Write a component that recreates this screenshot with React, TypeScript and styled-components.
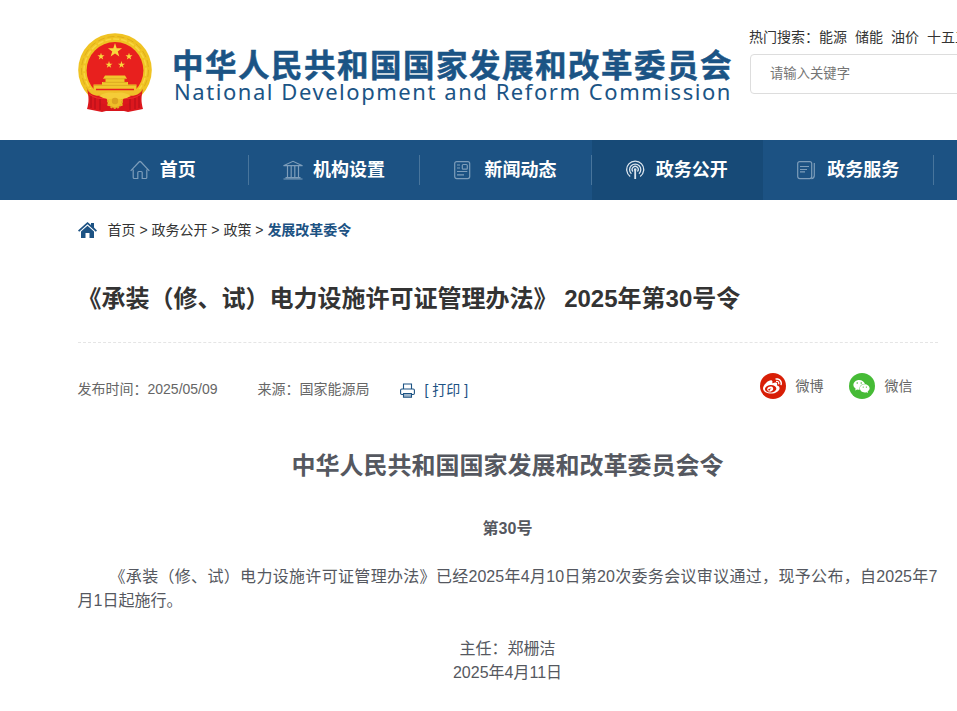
import React from "react";
import styled, { createGlobalStyle } from "styled-components";
import { FaWeibo, FaWeixin } from "react-icons/fa";

const GlobalStyle = createGlobalStyle`
  * { box-sizing: border-box; }
  body {
    margin: 0;
    overflow: hidden;
    background: #fff;
    color: #333;
    font-family: "Liberation Sans", "Noto Sans CJK SC", sans-serif;
    font-size: 14px;
    text-spacing-trim: space-all;
  }
  h1, h2, p { margin: 0; }
`;

const Page = styled.div`
  width: 957px;
  height: 711px;
  overflow: hidden;
`;

const Header = styled.header`
  display: flex;
  height: 140px;
  padding-left: 78px;
`;

const EmblemSvg = styled.svg`
  flex: none;
  width: 74px;
  height: 82px;
  margin-top: 32px;
`;

const Brand = styled.div`
  flex: none;
  width: 578px;
  margin: 48px 0 0 20px;
  color: #1b5485;
  white-space: nowrap;
`;

const BrandName = styled.div`
  height: 31px;
  font-family: "Noto Sans CJK SC", sans-serif;
  font-size: 31.5px;
  font-weight: 700;
  line-height: 31px;
  letter-spacing: 1.5px;
  -webkit-text-stroke: 0.5px #1b5485;
`;

const BrandLatin = styled.div`
  padding-left: 2px;
  font-family: "Noto Sans", sans-serif;
  font-size: 22px;
  line-height: 25px;
  letter-spacing: 1.55px;
`;

const SearchArea = styled.div`
  flex: none;
  width: 340px;
  padding-top: 26px;
`;

const HotWords = styled.div`
  display: flex;
  gap: 8px;
  height: 28px;
  margin-left: -1px;
  line-height: 22px;
  white-space: nowrap;
`;

const HotGroup = styled.span`
  display: flex;
`;

const SearchInput = styled.input`
  display: block;
  width: 320px;
  height: 40px;
  padding: 0 0 2px 19px;
  border: 1px solid #ddd;
  border-radius: 4px;
  outline: none;
  font: 13.33px "Liberation Sans", "Noto Sans CJK SC", sans-serif;
  &::placeholder { color: #757575; opacity: 1; }
`;

const Nav = styled.nav`
  display: flex;
  height: 60px;
  padding-left: 77.5px;
  background: #1c5283;
  overflow: hidden;
`;

const NavItem = styled.div<{ $active?: boolean }>`
  display: flex;
  flex: none;
  align-items: center;
  width: 171.4px;
  background: ${(p) => (p.$active ? "#174a77" : "transparent")};
`;

const NavContent = styled.div`
  display: flex;
  flex: 1;
  align-items: center;
  justify-content: center;
  gap: 10px;
  height: 60px;
  color: #fff;
  font-size: 18px;
  font-weight: 700;
  line-height: 60px;
  white-space: nowrap;
`;

const NavRule = styled.span<{ $hidden?: boolean }>`
  width: 1px;
  height: 30px;
  background: ${(p) => (p.$hidden ? "transparent" : "#48759c")};
`;

const NavSvg = styled.svg<{ $active?: boolean }>`
  flex: none;
  width: 20px;
  height: 20px;
  fill: none;
  stroke: ${(p) => (p.$active ? "#dbe5ee" : "#7d9dba")};
  stroke-width: ${(p) => (p.$active ? 1.3 : 1.2)};
`;

const Main = styled.main`
  width: 860px;
  margin-left: 77.5px;
`;

const Crumbs = styled.div`
  display: flex;
  align-items: center;
  height: 60px;
  line-height: 22px;
  white-space: pre;
  svg { flex: none; margin-right: 11px; }
`;

const Current = styled.strong`
  color: #1c5283;
`;

const Title = styled.h1`
  height: 83px;
  padding-top: 21px;
  border-bottom: 1px dashed #e5e5e5;
  font-size: 24px;
  line-height: 36px;
  white-space: nowrap;
`;

const Meta = styled.div`
  display: flex;
  height: 106px;
  padding-top: 34px;
  color: #666;
  line-height: 24px;
  white-space: nowrap;
`;

const MetaItem = styled.span<{ $width: number }>`
  width: ${(p) => p.$width}px;
`;

const Print = styled.span`
  display: flex;
  gap: 10px;
  padding-top: 1px;
  color: #1c5283;
  svg { margin-top: 5px; }
`;

const Share = styled.div`
  display: flex;
  gap: 25px;
  margin: -4px 25px 0 auto;
`;

const ShareItem = styled.span`
  display: flex;
  align-items: center;
  gap: 10px;
  height: 26px;
`;

const ShareIcon = styled.span<{ $color: string }>`
  display: flex;
  align-items: center;
  justify-content: center;
  width: 26px;
  height: 26px;
  border-radius: 50%;
  background: ${(p) => p.$color};
  color: #fff;
`;

const Article = styled.article`
  color: #555860;
  font-size: 16px;
  line-height: 24px;
`;

const OrderTitle = styled.h2`
  height: 68px;
  padding-top: 1px;
  font-size: 24px;
  line-height: 32px;
  text-align: center;
`;

const OrderNumber = styled.p`
  height: 48px;
  font-weight: 700;
  text-align: center;
`;

const Paragraph = styled.p`
  margin-bottom: 24px;
  text-align: justify;
  text-indent: 2em;
`;

const Signature = styled.p`
  text-align: center;
`;

function star(cx: number, cy: number, r: number) {
  return Array.from({ length: 10 }, (_, i) => {
    const radius = i % 2 ? r * 0.39 : r;
    const a = (i * Math.PI) / 5 - Math.PI / 2;
    return `${cx + radius * Math.cos(a)},${cy + radius * Math.sin(a)}`;
  }).join(" ");
}

function Emblem() {
  return (
    <EmblemSvg viewBox="0 0 74 82" aria-label="国徽">
      <ellipse cx="37" cy="38" rx="36.8" ry="36.8" fill="#f0c323" />
      <circle cx="37" cy="38" r="33.5" fill="none" stroke="#d9a81b" strokeWidth=".8" strokeDasharray="7 3" />
      <circle cx="37" cy="38" r="31" fill="none" stroke="#f8d640" strokeWidth="1.5" strokeDasharray="6 2" />
      <circle cx="37" cy="38.5" r="28.4" fill="#e8201e" />
      <g fill="#f8d83c">
        <polygon points={star(37, 18.5, 7.4)} />
        <polygon points={star(23, 24.5, 3.7)} />
        <polygon points={star(51, 24.5, 3.7)} />
        <polygon points={star(31, 32.8, 3.7)} />
        <polygon points={star(43.5, 32.8, 3.7)} />
      </g>
      <path d="M27 43.5h20l2 3.2H25zM27.5 46.7h19V50h3.5v2.5h8.5V57h-43v-4.5H24V50h3.5z" fill="#f1c72d" />
      <path d="M26 46.8h22M25 50.3h24M16 53.4h42" stroke="#cf981b" strokeWidth=".6" />
      <path d="M11 57h52l-7 11H18z" fill="#efbf28" />
      <path d="M18 57.5h38" stroke="#e8201e" strokeWidth="1.4" />
      <path d="M9 57c3 6 9 8 18 6l3 7-2 9-4 1-15-3c2-7 2-12 0-20M65 57c-3 6-9 8-18 6l-3 7 2 9 4 1 15-3c-2-7-2-12 0-20" fill="#dc171d" />
      <path d="M22 71q15 7 30 0l-2 8H24z" fill="#d8151c" />
      <path d="M13 64v12M17 66v11M22 67v11M61 64v12M57 66v11M52 67v11" stroke="#aa0f18" strokeWidth=".9" />
      <path d="M11 62q8 6 17 4M63 62q-8 6-17 4" fill="none" stroke="#f0372f" strokeWidth=".8" />
      <circle cx="37" cy="69" r="7" fill="#efbf28" stroke="#e1ad21" strokeWidth="2" strokeDasharray="2 1.4" />
      <path d="M21 64q7-5 16-3 9-2 16 3-8 5-16 2-8 3-16-2" fill="#f5cc38" />
      <circle cx="37" cy="69" r="3.2" fill="#dca320" />
    </EmblemSvg>
  );
}

type NavKind = "home" | "bank" | "news" | "signal" | "service";

const navDrawings: Record<NavKind, React.ReactNode> = {
  home: <path d="M.7 10.8 9 2Q10 1 11 2l8.3 8.8M3.2 9.5v8q0 1 1 1h3.6v-6q0-1 1-1h2.4q1 0 1 1v6h3.6q1 0 1-1v-8" />,
  bank: <path d="M.5 5.7 10 1.3l9.5 4.4zM1 5.7h18M4.5 6v11.5M8.2 6v11.5M11.8 6v11.5M15.5 6v11.5M2.5 17.7h15M.5 19h19" />,
  news: (
    <>
      <rect x=".7" y="1.6" width="15" height="17" rx="2" />
      <path d="M3 5h3M3 8h3M3 11.5h10.3M3 14.8h7" />
      <rect x="8.3" y="4.5" width="5" height="4.7" rx="1" />
    </>
  ),
  signal: (
    <>
      <path d="M4.2 16.5a8.5 8.5 0 1 1 10 0M5.4 13.8a5.6 5.6 0 1 1 7.6 0M7 11.5a3 3 0 1 1 4.4 0" />
      <circle cx="9.2" cy="9.5" r=".7" />
      <path d="M9.2 10v9" strokeWidth="1.8" />
    </>
  ),
  service: (
    <>
      <rect x=".7" y="1.6" width="14" height="17" rx="2" />
      <path d="M3 6.5h9M3 9.5h7M3 11.8h5M17.3 3v12.5q0 3-3 3.1" />
    </>
  ),
};

const navItems: { label: string; kind: NavKind; active?: boolean }[] = [
  { label: "首页", kind: "home" },
  { label: "机构设置", kind: "bank" },
  { label: "新闻动态", kind: "news" },
  { label: "政务公开", kind: "signal", active: true },
  { label: "政务服务", kind: "service" },
];

export default function App() {
  return (
    <Page>
      <GlobalStyle />
      <Header>
        <Emblem />
        <Brand>
          <BrandName>中华人民共和国国家发展和改革委员会</BrandName>
          <BrandLatin>National Development and Reform Commission</BrandLatin>
        </Brand>
        <SearchArea>
          <HotWords>
            <HotGroup>
              <span>热门搜索：</span>
              <span>能源</span>
            </HotGroup>
            <span>储能</span>
            <span>油价</span>
            <span>十五五</span>
          </HotWords>
          <SearchInput placeholder="请输入关键字" />
        </SearchArea>
      </Header>
      <Nav>
        {navItems.map((item) => (
          <NavItem key={item.kind} $active={item.active}>
            <NavContent>
              <NavSvg viewBox="0 0 20 20" $active={item.active}>
                {navDrawings[item.kind]}
              </NavSvg>
              {item.label}
            </NavContent>
            <NavRule $hidden={item.active} />
          </NavItem>
        ))}
      </Nav>
      <Main>
        <Crumbs>
          <svg width="19" height="18" viewBox="0 0 19 18" fill="#1c5283">
            <path d="M9.5 1 13 4V2h3v4.6l3 2.9-1.2 1.2-8.3-7.4-8.3 7.4L0 9.5z" />
            <path d="M3 10.4 9.5 4.7l6.5 5.7V17h-4.5v-5h-4v5H3z" />
          </svg>
          首页 &gt; 政务公开 &gt; 政策 &gt; <Current>发展改革委令</Current>
        </Crumbs>
        <Title>《承装（修、试）电力设施许可证管理办法》 2025年第30号令</Title>
        <Meta>
          <MetaItem $width={180}>发布时间：2025/05/09</MetaItem>
          <MetaItem $width={142}>来源：国家能源局</MetaItem>
          <Print>
            <svg width="15" height="15" viewBox="0 0 15 15" fill="none" stroke="#1c5283" strokeWidth="1.1">
              <path d="M3.5 6V1h8v5M3 11.5H1.8Q.6 11.5.6 10.3V7.2Q.6 6 1.8 6h11.4q1.2 0 1.2 1.2v3.1q0 1.2-1.2 1.2H12" />
              <path d="M3.5 10.5h8v3.7h-8z" fill="#9db5ca" />
            </svg>
            [ 打印 ]
          </Print>
          <Share>
            <ShareItem>
              <ShareIcon $color="#d81e06"><FaWeibo size={19} /></ShareIcon>
              微博
            </ShareItem>
            <ShareItem>
              <ShareIcon $color="#46bb36"><FaWeixin size={17} /></ShareIcon>
              微信
            </ShareItem>
          </Share>
        </Meta>
        <Article>
          <OrderTitle>中华人民共和国国家发展和改革委员会令</OrderTitle>
          <OrderNumber>第30号</OrderNumber>
          <Paragraph>
            《承装（修、试）电力设施许可证管理办法》已经2025年4月10日第20次委务会议审议通过，现予公布，自2025年7月1日起施行。
          </Paragraph>
          <Signature>主任：郑栅洁</Signature>
          <Signature>2025年4月11日</Signature>
        </Article>
      </Main>
    </Page>
  );
}
